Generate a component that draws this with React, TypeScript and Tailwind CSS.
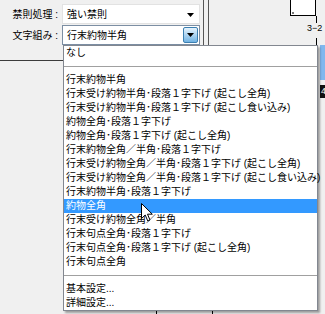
import React from "react";

const items = [
  "行末約物半角",
  "行末受け約物半角･段落１字下げ (起こし全角)",
  "行末受け約物半角･段落１字下げ (起こし食い込み)",
  "約物全角･段落１字下げ",
  "約物全角･段落１字下げ (起こし全角)",
  "行末約物全角／半角･段落１字下げ",
  "行末受け約物全角／半角･段落１字下げ (起こし全角)",
  "行末受け約物全角／半角･段落１字下げ (起こし食い込み)",
  "行末約物半角･段落１字下げ",
  "約物全角",
  "行末受け約物全角／半角",
  "行末句点全角･段落１字下げ",
  "行末句点全角･段落１字下げ (起こし全角)",
  "行末句点全角",
];

const font = {
  fontFamily: '"Liberation Sans", "Noto Sans CJK JP", sans-serif',
};

function Separator() {
  return (
    <div className="h-[13px] flex items-center">
      <div className="w-full h-px bg-[#a0a0a0]" />
    </div>
  );
}

function MenuRow({ label, active }: { label: string; active?: boolean }) {
  return (
    <div
      className={
        "h-[14px] leading-[14px] pl-[2px] whitespace-nowrap " +
        (active ? "bg-[#3399ff] text-white" : "text-black")
      }
    >
      {label}
    </div>
  );
}

export default function App() {
  return (
    <div
      className="relative w-[325px] h-[314px] bg-[#f0f0f0] overflow-hidden text-[10px] text-black"
      style={font}
    >
      {/* Top area */}
      <div className="flex h-[61px]">
        {/* Settings panel */}
        <div className="w-[203px] h-[61px] border-b border-[#3c3c3c] flex flex-col gap-[1px] pt-[4px]">
          <div className="flex items-center h-[20px]">
            <div className="w-[62px] text-right pr-[4px]">禁則処理 :</div>
            <div className="w-[138px] h-[20px] bg-white border border-[#e2e2e2] flex items-center pl-[4px] relative">
              <span>強い禁則</span>
              <svg
                className="absolute right-[5px] top-[8px]"
                width="7"
                height="4"
                viewBox="0 0 7 4"
              >
                <path d="M0 0h7L3.5 4z" fill="#000" />
              </svg>
            </div>
          </div>
          <div className="flex items-center h-[20px]">
            <div className="w-[62px] text-right pr-[4px]">文字組み :</div>
            <div className="w-[138px] h-[20px] bg-white border border-[#7c8ea3] flex items-center pl-[4px] pr-[1px]">
              <span className="flex-1">行末約物半角</span>
              <div className="w-[15px] h-[16px] border border-[#3c7fb1] rounded-[2px] bg-gradient-to-b from-[#e6f3fc] to-[#70b3e3] flex items-center justify-center">
                <svg width="7" height="4" viewBox="0 0 7 4">
                  <path d="M0 0h7L3.5 4z" fill="#000" />
                </svg>
              </div>
            </div>
          </div>
        </div>
        {/* Panel divider */}
        <div className="w-[5px] border-l border-[#555]" />
        <div className="w-[5px] border-l border-[#555]" />
        {/* Canvas */}
        <div className="flex-1 relative">
          <div className="absolute left-[77px] top-0 w-[26px] h-[16px] bg-white border border-t-0 border-black">
            <div className="absolute left-[1px] bottom-[1px] w-[2px] h-[2px] bg-[#777]" />
          </div>
          <div className="absolute left-[103px] top-[16px] w-px h-[7px] bg-black" />
          <div
            className="absolute left-[94px] top-[23px] text-[9px] leading-[10px]"
            style={{ fontFamily: '"Liberation Sans", sans-serif' }}
          >
            3−2
          </div>
          <div className="absolute left-[103px] top-[38px] w-px h-[8px] bg-black" />
          <div className="absolute left-[107px] top-[45px] w-[8px] h-[35px] bg-[#80b7ee]" />
          <div className="absolute left-[107px] top-[85px] w-[8px] h-[13px] bg-[#111] text-white text-[9px] leading-[13px] pl-[1px]">
            4
          </div>
        </div>
      </div>

      {/* Canvas lines peeking under the menu */}
      <div className="absolute left-[156px] top-[309px] w-px h-[5px] bg-black" />
      <div className="absolute left-[212px] top-[309px] w-px h-[5px] bg-black" />

      {/* Dropdown list */}
      <div className="absolute left-[63px] top-[45px] w-[255px] bg-white border border-[#828790] shadow-[2px_2px_2px_rgba(0,0,0,0.35)]">
        <MenuRow label="なし" />
        <Separator />
        {items.map((item) => (
          <MenuRow key={item} label={item} active={item === "約物全角"} />
        ))}
        <Separator />
        <MenuRow label="基本設定..." />
        <MenuRow label="詳細設定..." />
      </div>

      {/* Mouse pointer */}
      <svg
        className="absolute left-[141px] top-[203px]"
        width="12"
        height="19"
        viewBox="0 0 12 19"
      >
        <path
          d="M0.5 0.5V15.5L4.2 12L6.8 18L9 17L6.5 11.2H11.3Z"
          fill="#fff"
          stroke="#000"
          strokeWidth="1"
          strokeLinejoin="miter"
        />
      </svg>
    </div>
  );
}
